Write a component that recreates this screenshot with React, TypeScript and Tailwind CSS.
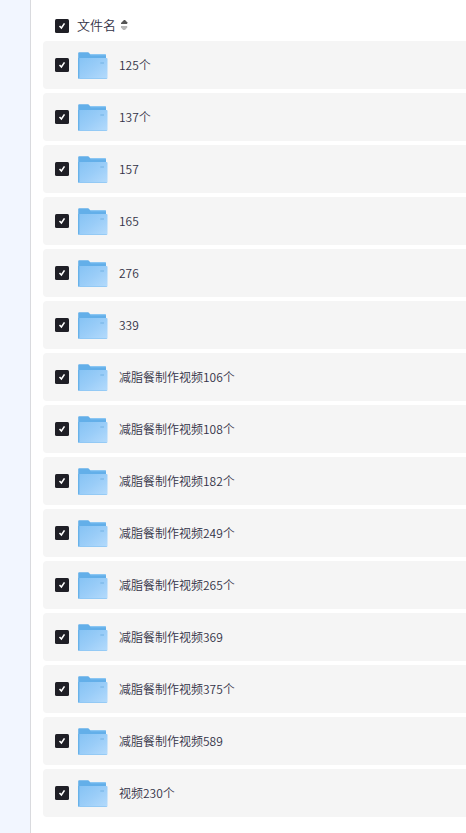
import { useState } from "react";

const FOLDERS = [
  "125个",
  "137个",
  "157",
  "165",
  "276",
  "339",
  "减脂餐制作视频106个",
  "减脂餐制作视频108个",
  "减脂餐制作视频182个",
  "减脂餐制作视频249个",
  "减脂餐制作视频265个",
  "减脂餐制作视频369",
  "减脂餐制作视频375个",
  "减脂餐制作视频589",
  "视频230个",
];

type CheckboxProps = {
  checked: boolean;
  label: string;
  onToggle: () => void;
};

function Checkbox({ checked, label, onToggle }: CheckboxProps) {
  return (
    <button
      type="button"
      role="checkbox"
      aria-checked={checked}
      aria-label={label}
      onClick={onToggle}
      className={`flex size-3.5 shrink-0 items-center justify-center rounded-[1.5px] ${
        checked ? "bg-[#1f1f26]" : "border border-[#c4c4cc] bg-white"
      }`}
    >
      {checked && (
        <svg viewBox="0 0 14 14" className="size-3.5" fill="none" stroke="#fff" strokeWidth="1.6">
          <path d="M4.5 7 6.4 9 9.5 4.4" />
        </svg>
      )}
    </button>
  );
}

function FolderIcon() {
  return (
    <svg viewBox="0 0 30 28" className="mt-0.5 h-7 w-[30px] shrink-0" aria-hidden="true">
      <defs>
        <linearGradient id="folder-front" x1="0" y1="0" x2="1" y2="1">
          <stop offset="0" stopColor="#86c3f4" />
          <stop offset="0.5" stopColor="#9acdf8" />
          <stop offset="1" stopColor="#b5dbfc" />
        </linearGradient>
      </defs>
      <path d="M.2 1.1Q.2.2 1.2.2H10Q10.7.2 11.1.9L12.2 2.2H27Q28 2.2 28 3.2V26H.2Z" fill="#63afe9" />
      <path d="M12.2 2.2H27Q28 2.2 28 3.2H12.6Z" fill="#8cc8f5" />
      <path d="M1.2 6H28.5Q29.5 6 29.5 7V26Q29.5 27 28.5 27H1.2Z" fill="url(#folder-front)" />
      <path d="M.2 6V26.2Q.2 27 1 27H1.2V6Z" fill="#63afe9" />
      <path d="M1.2 26.2H28.8V27H1.2Z" fill="#8fc7f4" />
      <path d="M22.3 10H26V12H22.3Z" fill="#87c0ee" />
    </svg>
  );
}

function SortIcon() {
  return (
    <svg viewBox="0 0 8 12" className="ml-[5px] h-3 w-2" aria-hidden="true">
      <path d="M3 .9H4L6.2 3.2V5H0V3.9Z" fill="#555" />
      <path d="M2.2 11.1H4L6.2 8.6V7H0V8.6Z" fill="#b8b8b8" />
    </svg>
  );
}

export default function App() {
  const [selected, setSelected] = useState<string[]>(FOLDERS);
  const allSelected = selected.length === FOLDERS.length;

  function toggle(name: string) {
    setSelected((current) =>
      current.includes(name) ? current.filter((item) => item !== name) : [...current, name],
    );
  }

  return (
    <div className="flex h-screen w-full overflow-hidden bg-white font-['Noto_Sans_CJK_SC',sans-serif] font-[350] text-[#333347]">
      <aside className="w-[31px] shrink-0 border-r border-[#d9dade] bg-[#f2f6ff]" />
      <main className="min-w-0 flex-1 pl-3">
        <div className="flex h-[41px] items-center pt-2.5 pl-3">
          <Checkbox
            checked={allSelected}
            label="全选"
            onToggle={() => setSelected(allSelected ? [] : FOLDERS)}
          />
          <button type="button" className="mb-0.5 ml-2 flex items-center text-[13px] leading-5">
            文件名
            <SortIcon />
          </button>
        </div>
        <ul className="flex flex-col gap-1">
          {FOLDERS.map((name) => (
            <li key={name} className="flex h-12 shrink-0 items-center rounded-l bg-[#f5f5f5] pl-3">
              <Checkbox checked={selected.includes(name)} label={name} onToggle={() => toggle(name)} />
              <div className="ml-[9px] flex items-center gap-[11px]">
                <FolderIcon />
                <span className="text-xs whitespace-nowrap">{name}</span>
              </div>
            </li>
          ))}
        </ul>
      </main>
    </div>
  );
}
